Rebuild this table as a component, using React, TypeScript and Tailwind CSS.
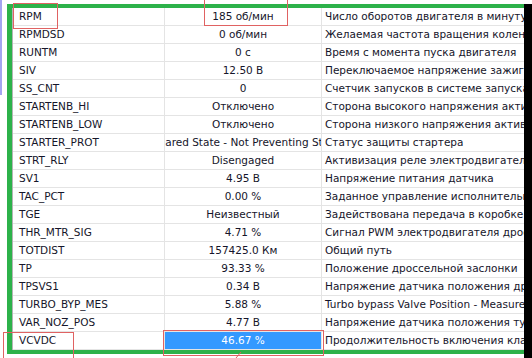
const rows = [
    { name: "RPM", value: "185 об/мин", desc: "Число оборотов двигателя в минуту" },
    { name: "RPMDSD", value: "0 об/мин", desc: "Желаемая частота вращения коленчатого вала" },
    { name: "RUNTM", value: "0 с", desc: "Время с момента пуска двигателя" },
    { name: "SIV", value: "12.50 В", desc: "Переключаемое напряжение зажигания" },
    { name: "SS_CNT", value: "0", desc: "Счетчик запусков в системе запуска/остановки" },
    { name: "STARTENB_HI", value: "Отключено", desc: "Сторона высокого напряжения активации стартера" },
    { name: "STARTENB_LOW", value: "Отключено", desc: "Сторона низкого напряжения активации стартера" },
    { name: "STARTER_PROT", value: "Cleared State - Not Preventing Start", desc: "Статус защиты стартера" },
    { name: "STRT_RLY", value: "Disengaged", desc: "Активизация реле электродвигателя стартера" },
    { name: "SV1", value: "4.95 В", desc: "Напряжение питания датчика" },
    { name: "TAC_PCT", value: "0.00 %", desc: "Заданное управление исполнительным механизмом" },
    { name: "TGE", value: "Неизвестный", desc: "Задействована передача в коробке передач" },
    { name: "THR_MTR_SIG", value: "4.71 %", desc: "Сигнал PWM электродвигателя дроссельной заслонки" },
    { name: "TOTDIST", value: "157425.0 Км", desc: "Общий путь" },
    { name: "TP", value: "93.33 %", desc: "Положение дроссельной заслонки" },
    { name: "TPSVS1", value: "0.34 В", desc: "Напряжение датчика положения дроссельной заслонки" },
    { name: "TURBO_BYP_MES", value: "5.88 %", desc: "Turbo bypass Valve Position - Measured" },
    { name: "VAR_NOZ_POS", value: "4.77 В", desc: "Напряжение датчика положения турбины" },
    { name: "VCVDC", value: "46.67 %", desc: "Продолжительность включения клапана" },
];

const Row = ({ row, selected }: any) => {
    return (
        <div className="grid grid-cols-[152px_157px_1fr] h-[18px]">
            <div className="border-r border-b border-[#e4e4e4] pl-[6px] leading-[17px] whitespace-nowrap overflow-hidden">
                {row.name}
            </div>
            <div
                className={
                    selected
                        ? "border-r border-b border-[#e4e4e4] flex justify-center overflow-hidden leading-[17px] whitespace-nowrap bg-[#3399ff] text-white"
                        : "border-r border-b border-[#e4e4e4] flex justify-center overflow-hidden leading-[17px] whitespace-nowrap"
                }
            >
                <span className="shrink-0">{row.value}</span>
            </div>
            <div className="border-b border-[#e4e4e4] pl-[3px] leading-[17px] whitespace-nowrap overflow-hidden">
                {row.desc}
            </div>
        </div>
    );
};

export default function App() {
    return (
        <div className="w-[532px] h-[358px] bg-white relative overflow-hidden flex font-['DejaVu_Sans',sans-serif] text-[10.5px] text-[#15152a]">
            <div className="w-[2px] h-[95px] bg-[#a4a4f0] shrink-0" />
            <div className="ml-[5px] mt-[4px] w-[517px] h-[350px] shrink-0 border-l-[5px] border-t-4 border-b-4 border-[#2db24a]">
                <div className="h-full border-l border-[#b4b4b4] overflow-hidden">
                    {rows.map((row, index) => (
                        <Row key={index} row={row} selected={index === rows.length - 1} />
                    ))}
                </div>
            </div>
            <div className="mt-[4px] w-[8px] h-[354px] bg-black shrink-0" />

            {/* annotation boxes */}
            <div className="absolute left-[13px] top-[3px] w-[45px] h-[26px] border border-[#e06262]" />
            <div className="absolute left-[204px] top-[-1px] w-[84px] h-[27px] border border-[#e06262]" />
            <div className="absolute left-[3px] top-[332px] w-[71px] h-[30px] border border-[#e06262]" />
            <div className="absolute left-[163px] top-[330px] w-[161px] h-[26px] border border-[#e06262]" />
            <svg className="absolute left-[235px] top-[351px]" width="8" height="7" viewBox="0 0 8 7">
                <line x1="1" y1="7" x2="6" y2="1" stroke="#e06262" strokeWidth="1" />
            </svg>
        </div>
    );
}
